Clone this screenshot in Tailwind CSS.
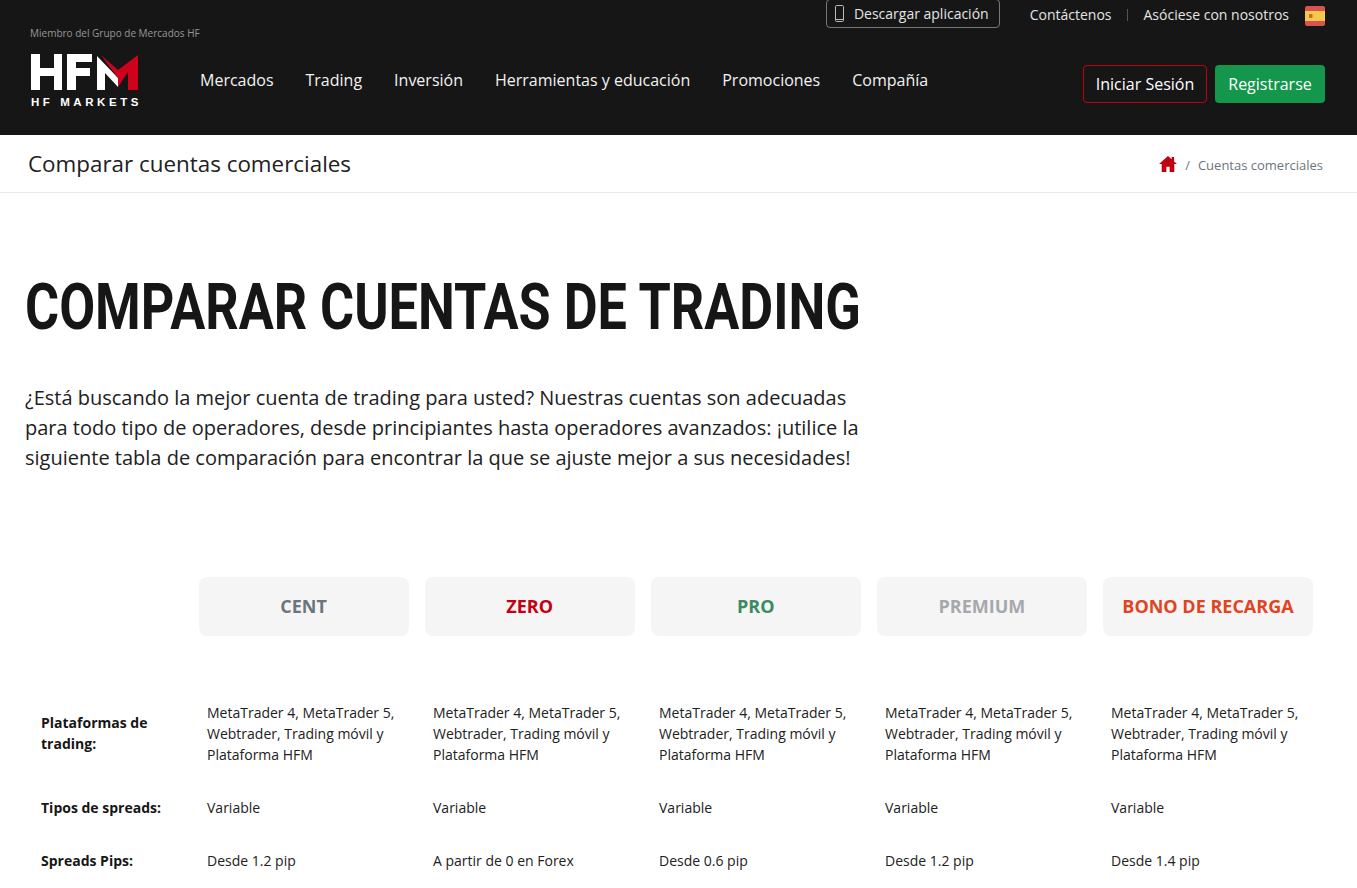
<!DOCTYPE html>
<html lang="es">
<head>
  <meta charset="UTF-8" />
  <title>Comparar cuentas</title>
  <script src="https://cdn.jsdelivr.net/npm/@tailwindcss/browser@4"></script>
</head>
<body class="bg-white text-[#212121] font-['Open_Sans','Noto_Sans',sans-serif] overflow-hidden h-[888px]">
  <!-- header -->
  <header class="h-[135px] bg-[#161616] relative text-white">
    <div class="flex justify-end items-start pr-8 h-[30px]">
      <a class="flex items-center h-[29px] -mt-px border border-[#77787a] rounded-[4px] pl-[8px] pr-[10px] text-[14px] text-[#e4e4e4]">
        <svg class="w-[9px] h-[17px] mr-[10px]" viewBox="0 0 9 17" fill="none" stroke="#bbb" stroke-width="1"><rect x="0.5" y="0.5" width="8" height="16" rx="1.2"/><path d="M0.5 14.5h8"/></svg>
        Descargar aplicación
      </a>
      <a class="ml-[30px] mt-[4px] text-[14px] text-[#e4e4e4]">Contáctenos</a>
      <span class="mx-[15.5px] mt-[9px] w-px h-[12px] bg-[#555]"></span>
      <a class="mt-[4px] text-[14px] text-[#e4e4e4]">Asóciese con nosotros</a>
      <svg class="ml-[16px] mt-[6px] w-[20px] h-[20px] rounded-[2px]" viewBox="0 0 20 20"><rect width="20" height="20" fill="#d9534f"/><rect y="5" width="20" height="10" fill="#f7c948"/><rect x="4" y="8" width="3.5" height="4" fill="#cc6a3c"/></svg>
    </div>
    <p class="absolute left-[30px] top-[26px] text-[10px] text-[#969696]">Miembro del Grupo de Mercados HF</p>
    <div class="absolute left-[30px] top-[54px] w-[110px]">
      <svg class="block w-[110px] h-[37px]" viewBox="0 0 110 37">
        <path fill="#fff" d="M1 0h9v14h14V0h8v36h-8V22H10v14H1z"/>
        <path fill="#fff" d="M37 0h25v8H46v6h14v8H46v14h-9z"/>
        <path fill="#fff" d="M67 2L88 24v9L75 19v17h-8z"/>
        <path fill="#d0021b" d="M71 1L88 16 108 1v35H98V18L88 33V24z"/>
      </svg>
      <p class="mt-[6px] ml-px text-[11.5px] font-bold tracking-[0.31em] leading-none whitespace-nowrap font-['Liberation_Sans',sans-serif]">HF MARKETS</p>
    </div>
    <nav class="absolute left-[200px] top-[69px] flex gap-[32px] text-[16px] leading-[22px] text-[#f2f2f2]">
      <a>Mercados</a><a>Trading</a><a>Inversión</a><a>Herramientas y educación</a><a>Promociones</a><a>Compañía</a>
    </nav>
    <div class="absolute right-[32px] top-[65px] flex gap-2 text-[16px]">
      <a class="flex items-center justify-center w-[124px] h-[38px] border border-[#c30012] rounded-[4px]">Iniciar Sesión</a>
      <a class="flex items-center justify-center w-[110px] h-[38px] bg-[#14964c] rounded-[4px]">Registrarse</a>
    </div>
  </header>

  <!-- breadcrumb bar -->
  <div class="h-[58px] border-b border-[#eaeaea] flex items-center justify-between pl-[28px] pr-[34px]">
    <h2 class="text-[22.4px]">Comparar cuentas comerciales</h2>
    <div class="flex items-center text-[13px] text-[#6c757d] pt-[4px]">
      <svg class="w-[18px] h-[16px] -mt-[4px]" viewBox="0 0 19 17" fill="#c30012"><path d="M9.5 0L0 8.5h2.8V17h5v-5.5h3.4V17h5V8.5H19l-3-2.7V1h-2.6v2.4z"/></svg>
      <span class="mx-[8px]">/</span>
      <span>Cuentas comerciales</span>
    </div>
  </div>

  <!-- intro -->
  <section class="px-[25px] pt-[77px]">
    <h1 class="text-[64px] leading-[76px] font-bold font-['Roboto',sans-serif] text-[#161616] origin-left scale-x-[0.815] whitespace-nowrap">COMPARAR CUENTAS DE TRADING</h1>
    <p class="mt-[37px] w-[850px] text-[20px] leading-[30px]">¿Está buscando la mejor cuenta de trading para usted? Nuestras cuentas son adecuadas para todo tipo de operadores, desde principiantes hasta operadores avanzados: ¡utilice la siguiente tabla de comparación para encontrar la que se ajuste mejor a sus necesidades!</p>
  </section>

  <!-- table -->
  <section class="mt-[104px] pl-[198.5px] pr-[44px]">
    <div class="grid grid-cols-5 gap-x-[16px]">
      <div class="h-[59px] rounded-[8px] bg-[#f5f5f5] flex items-center justify-center text-[18px] font-bold text-[#6c757d]">CENT</div>
      <div class="h-[59px] rounded-[8px] bg-[#f5f5f5] flex items-center justify-center text-[18px] font-bold text-[#c30012]">ZERO</div>
      <div class="h-[59px] rounded-[8px] bg-[#f5f5f5] flex items-center justify-center text-[18px] font-bold text-[#3c8a5f]">PRO</div>
      <div class="h-[59px] rounded-[8px] bg-[#f5f5f5] flex items-center justify-center text-[18px] font-bold text-[#a5a9ad]">PREMIUM</div>
      <div class="h-[59px] rounded-[8px] bg-[#f5f5f5] flex items-center justify-center text-[18px] font-bold text-[#e0451f]">BONO DE RECARGA</div>
    </div>
  </section>
  <section class="mt-[66px] pl-[41px] pr-[44px] text-[14px] leading-[21px]">
    <div class="grid grid-cols-[166px_repeat(5,226px)] items-center">
      <b class="pr-4 pb-[2px] text-[#161616] leading-[21px]">Plataformas de trading:</b>
      <div class="pr-4">MetaTrader 4, MetaTrader 5, Webtrader, Trading móvil y Plataforma HFM</div>
      <div class="pr-4">MetaTrader 4, MetaTrader 5, Webtrader, Trading móvil y Plataforma HFM</div>
      <div class="pr-4">MetaTrader 4, MetaTrader 5, Webtrader, Trading móvil y Plataforma HFM</div>
      <div class="pr-4">MetaTrader 4, MetaTrader 5, Webtrader, Trading móvil y Plataforma HFM</div>
      <div class="pr-4">MetaTrader 4, MetaTrader 5, Webtrader, Trading móvil y Plataforma HFM</div>
    </div>
    <div class="mt-[32px] grid grid-cols-[166px_repeat(5,226px)]">
      <b class="text-[#161616]">Tipos de spreads:</b><div>Variable</div><div>Variable</div><div>Variable</div><div>Variable</div><div>Variable</div>
    </div>
    <div class="mt-[32px] grid grid-cols-[166px_repeat(5,226px)]">
      <b class="text-[#161616]">Spreads Pips:</b><div>Desde 1.2 pip</div><div>A partir de 0 en Forex</div><div>Desde 0.6 pip</div><div>Desde 1.2 pip</div><div>Desde 1.4 pip</div>
    </div>
  </section>
</body>
</html>
